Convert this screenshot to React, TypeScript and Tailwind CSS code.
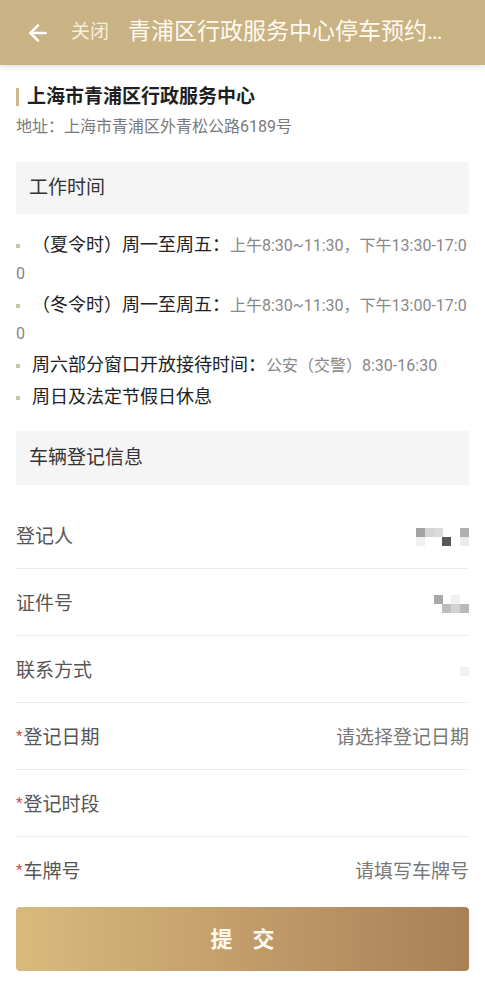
import { ArrowLeft } from "lucide-react";

type Cell = { x: number; y: number; c: string };

function Mosaic({ w, h, cells }: { w: number; h: number; cells: Cell[] }) {
  return (
    <svg width={w} height={h} viewBox={`0 0 ${w} ${h}`}>
      {cells.map((cell, i) => (
        <rect key={i} x={cell.x} y={cell.y} width={9} height={9} fill={cell.c} />
      ))}
    </svg>
  );
}

const hours = [
  { label: "（夏令时）周一至周五：", value: "上午8:30~11:30，下午13:30-17:00" },
  { label: "（冬令时）周一至周五：", value: "上午8:30~11:30，下午13:00-17:00" },
  { label: "周六部分窗口开放接待时间：", value: "公安（交警）8:30-16:30" },
  { label: "周日及法定节假日休息", value: "" },
];

function Row({
  label,
  required,
  value,
  last,
}: {
  label: string;
  required?: boolean;
  value?: React.ReactNode;
  last?: boolean;
}) {
  return (
    <div
      className={`h-[67px] flex items-center justify-between pt-[4px] ${
        last ? "" : "border-b border-[#ededed]"
      }`}
    >
      <div className="flex items-center text-[19px] text-[#555]">
        {required && <span className="text-[15px] text-[#d0464a] -mt-[4px] mr-[1px]">*</span>}
        {label}
      </div>
      {value}
    </div>
  );
}

export default function App() {
  return (
    <div className="w-[485px] min-h-[996px] bg-white font-[Roboto,Noto_Sans_CJK_SC,sans-serif]">
      {/* Header */}
      <header className="relative z-10 h-[65px] bg-[#c9b283] flex items-center shadow-[0_2px_6px_rgba(0,0,0,0.12)]">
        <ArrowLeft className="ml-[25px] w-[26px] h-[26px] text-white shrink-0" strokeWidth={2.4} />
        <span className="ml-[20px] text-[19px] text-[#f6eedc] shrink-0">关闭</span>
        <span className="ml-[19px] pr-[22px] text-[23px] text-[#fffaf0] truncate">
          青浦区行政服务中心停车预约登记
        </span>
      </header>

      <main className="px-4">
        {/* Center info */}
        <div className="pt-[20px] flex items-center">
          <span className="w-[3px] h-[18px] bg-[#cbb88f] mr-[8px]"></span>
          <h1 className="text-[19px] leading-[24px] font-bold text-[#1f1f1f]">上海市青浦区行政服务中心</h1>
        </div>
        <p className="mt-[7px] text-[16px] leading-[22px] text-[#7a7a7a]">地址：上海市青浦区外青松公路6189号</p>

        {/* Working hours */}
        <div className="mt-[24px] h-[52px] bg-[#f5f5f5] pl-[13px] flex items-center text-[19px] text-[#333]">
          工作时间
        </div>
        <div className="mt-[17px] flex flex-col gap-[4px]">
          {hours.map((h) => (
            <p key={h.label} className="break-all text-[18px] leading-[27px] text-[#222]">
              <span className="inline-block w-[4px] h-[4px] bg-[#c6c3a5] align-middle mr-[12px]"></span>
              {h.label}
              {h.value && <span className="text-[16px] text-[#888]">{h.value}</span>}
            </p>
          ))}
        </div>

        {/* Vehicle form */}
        <div className="mt-[21px] h-[54px] bg-[#f5f5f5] pl-[13px] flex items-center text-[19px] text-[#333]">
          车辆登记信息
        </div>
        <div className="mt-[17px]">
          <Row
            label="登记人"
            value={
              <Mosaic
                w={53}
                h={18}
                cells={[
                  { x: 0, y: 0, c: "#a3a3a3" },
                  { x: 9, y: 0, c: "#d4d4d4" },
                  { x: 18, y: 0, c: "#dadada" },
                  { x: 44, y: 0, c: "#b0b0b0" },
                  { x: 0, y: 9, c: "#f0f0f0" },
                  { x: 26, y: 9, c: "#575757" },
                  { x: 44, y: 9, c: "#ececec" },
                ]}
              />
            }
          />
          <Row
            label="证件号"
            value={
              <Mosaic
                w={35}
                h={18}
                cells={[
                  { x: 0, y: 0, c: "#a8a8a8" },
                  { x: 17, y: 0, c: "#f0f0f0" },
                  { x: 8, y: 9, c: "#bdbdbd" },
                  { x: 17, y: 9, c: "#d2d2d2" },
                  { x: 26, y: 9, c: "#b9b9b9" },
                ]}
              />
            }
          />
          <Row label="联系方式" value={<Mosaic w={9} h={9} cells={[{ x: 0, y: 0, c: "#f1f1f1" }]} />} />
          <Row label="登记日期" required value={<span className="text-[19px] text-[#777]">请选择登记日期</span>} />
          <Row label="登记时段" required />
          <Row label="车牌号" required last value={<span className="text-[19px] text-[#777]">请填写车牌号</span>} />
        </div>

        <button className="mt-[3px] w-full h-[64px] rounded-[4px] bg-gradient-to-r from-[#d8ba7e] via-[#c29d6b] to-[#a88158] flex items-center justify-center gap-[20px] text-[22px] font-bold text-[#fffaf0]">
          <span>提</span>
          <span>交</span>
        </button>
      </main>
    </div>
  );
}
